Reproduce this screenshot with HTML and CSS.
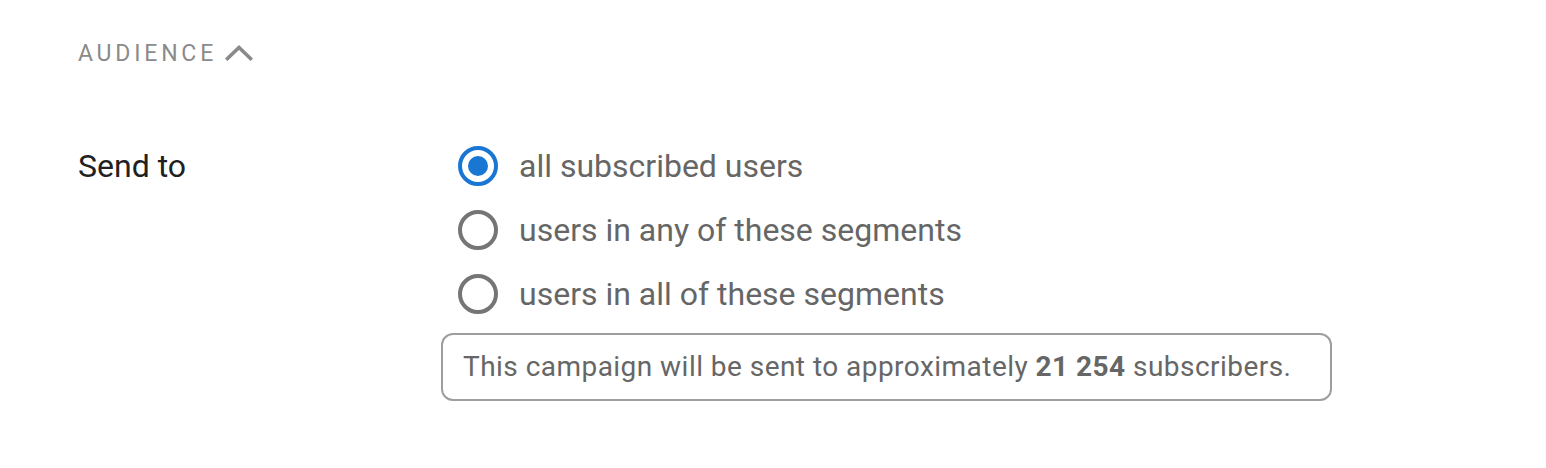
FILE: index.html
```html
<!DOCTYPE html>
<html lang="en">
<head>
<meta charset="utf-8">
<title>Audience</title>
<link rel="stylesheet" href="styles.css">
</head>
<body>
<section class="panel">
  <header class="section-head">
    <span class="section-title">AUDIENCE</span>
    <svg class="chevron" width="28" height="16" viewBox="0 0 28 16" aria-hidden="true">
      <path d="M2.5 13.5 L14 2.5 L25.5 13.5" fill="none" stroke="#8a8a8a" stroke-width="3.6" stroke-linecap="square"/>
    </svg>
  </header>
  <div class="field">
    <div class="field-label">Send to</div>
    <div class="field-body">
      <label class="option">
        <span class="radio checked"></span>
        <span class="option-text">all subscribed users</span>
      </label>
      <label class="option">
        <span class="radio"></span>
        <span class="option-text">users in any of these segments</span>
      </label>
      <label class="option">
        <span class="radio"></span>
        <span class="option-text">users in all of these segments</span>
      </label>
      <div class="estimate">This campaign will be sent to approximately <b>21 254</b> subscribers.</div>
    </div>
  </div>
</section>
</body>
</html>
```

FILE: styles.css
```css
html, body {
  margin: 0;
  padding: 0;
  background: #ffffff;
}

body {
  font-family: Roboto, "Liberation Sans", Arial, sans-serif;
}

.panel {
  padding: 38px 0 0 78px;
}

.section-head {
  display: flex;
  align-items: center;
  height: 32px;
}

.section-title {
  font-size: 23px;
  line-height: 32px;
  letter-spacing: 3.8px;
  color: #8a8a8a;
}

.chevron {
  margin-left: 8px;
  margin-top: -3px;
}

.field {
  display: flex;
  margin-top: 64px;
}

.field-label {
  width: 363px;
  font-size: 32px;
  line-height: 64px;
  color: #212121;
}

.field-body {
  display: flex;
  flex-direction: column;
  align-items: flex-start;
}

.option {
  display: flex;
  align-items: center;
  height: 64px;
  padding-left: 17px;
}

.radio {
  box-sizing: border-box;
  width: 40px;
  height: 40px;
  border: 4px solid #757575;
  border-radius: 50%;
  display: flex;
  align-items: center;
  justify-content: center;
}

.radio.checked {
  border-color: #1976d2;
}

.radio.checked::after {
  content: "";
  width: 20px;
  height: 20px;
  border-radius: 50%;
  background: #1976d2;
}

.option-text {
  margin-left: 21px;
  font-size: 32px;
  line-height: 40px;
  color: #666666;
}

.estimate {
  margin-top: 7px;
  border: 2px solid #9e9e9e;
  border-radius: 12px;
  padding: 0 39px 0 20px;
  font-size: 28px;
  line-height: 64px;
  letter-spacing: 0.46px;
  color: #666666;
}

.estimate b {
  font-weight: 700;
}
```
